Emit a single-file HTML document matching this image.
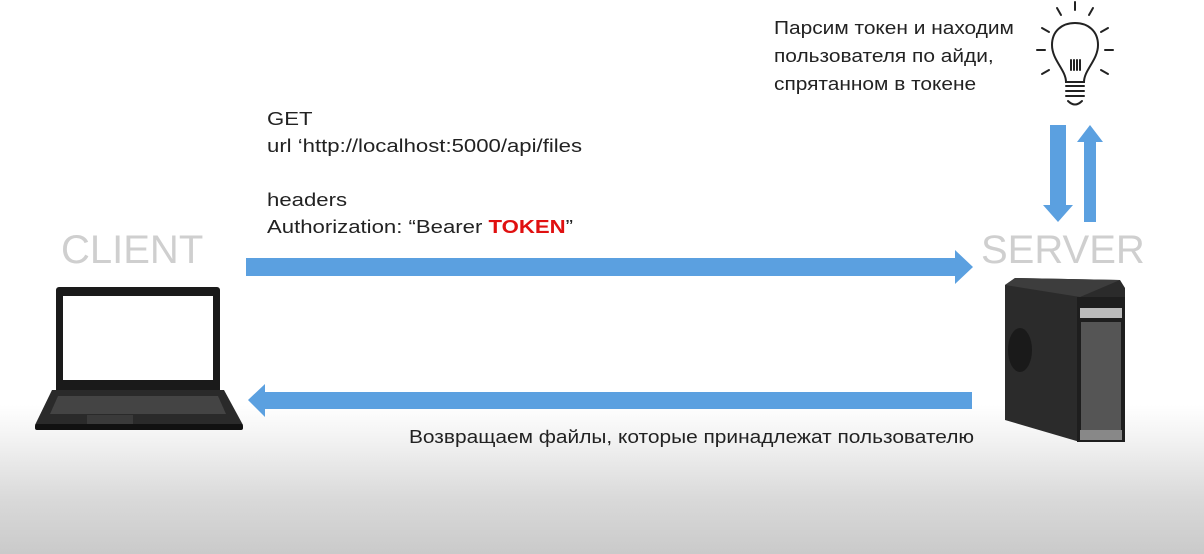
<!DOCTYPE html>
<html><head><meta charset="utf-8"><style>
body{margin:0;width:1204px;height:554px;overflow:hidden;position:relative;font-family:"Liberation Sans","Noto Sans CJK SC",sans-serif;
background:linear-gradient(to bottom,#fff 0,#fff 405px,#f2f2f2 440px,#d9d9d9 500px,#cacaca 554px);}
.t{position:absolute;font-size:18px;color:#222;line-height:27px;white-space:nowrap;transform-origin:0 0;transform:scaleX(1.16)}
.big{position:absolute;font-size:40px;color:#cfcfcf}
</style></head><body>
<div class="t" style="left:267px;top:106px;transform:scaleX(1.23)">GET<br>url ‘http://localhost:5000/api/files<br><br>headers<br>Authorization: “Bearer <b style="color:#e01010">TOKEN</b>”</div>
<div class="t" style="left:774px;top:14px;line-height:28px">Парсим токен и находим<br>пользователя по айди,<br>спрятанном в токене</div>
<div class="t" style="left:409px;top:424px">Возвращаем файлы, которые принадлежат пользователю</div>
<div class="big" style="left:61px;top:228px">CLIENT</div>
<div class="big" style="left:981px;top:228px">SERVER</div>
<svg width="1204" height="554" style="position:absolute;left:0;top:0">
<g fill="#5ba0e0">
<polygon points="246,258 955,258 955,250 973,267 955,284 955,276 246,276"/>
<polygon points="972,392 265,392 265,384 248,400 265,417 265,409 972,409"/>
<polygon points="1050,125 1066,125 1066,205 1073,205 1058,222 1043,205 1050,205"/>
<polygon points="1084,222 1096,222 1096,142 1103,142 1090,125 1077,142 1084,142"/>
</g>
<rect x="56" y="287" width="164" height="106" rx="3" fill="#1a1a1a"/>
<rect x="63" y="296" width="150" height="84" fill="#fff"/>
<polygon points="52,390 224,390 243,425 35,425" fill="#2a2a2a"/>
<polygon points="58,396 218,396 226,414 50,414" fill="#444"/>
<rect x="87" y="415" width="46" height="9" fill="#3a3a3a"/>
<rect x="35" y="424" width="208" height="6" rx="2" fill="#111"/>
<polygon points="1005,285 1015,278 1120,280 1125,288 1125,442 1080,442 1005,420" fill="#2b2b2b"/>
<polygon points="1005,285 1015,278 1120,280 1080,297" fill="#3d3d3d"/>
<rect x="1077" y="297" width="48" height="145" fill="#1e1e1e"/>
<rect x="1080" y="308" width="42" height="10" fill="#bbb"/>
<rect x="1081" y="322" width="40" height="108" fill="#555"/>
<rect x="1080" y="430" width="42" height="10" fill="#888"/>
<ellipse cx="1020" cy="350" rx="12" ry="22" fill="#1a1a1a"/>
<g stroke="#222" stroke-width="2" fill="none" stroke-linecap="round">
<path d="M1066,82 C1066,70 1052,60 1052,45 C1052,31 1062,23 1075,23 C1088,23 1098,31 1098,45 C1098,60 1084,70 1084,82 Z"/>
<path d="M1066,86 H1084 M1066,91 H1084 M1066,96 H1084 M1068,101 Q1075,108 1082,101"/>
<path d="M1071,60 V70 M1074,60 V70 M1077,60 V70 M1080,60 V70"/>
<path d="M1075,2 V10 M1057,8 L1061,15 M1093,8 L1089,15 M1042,28 L1049,32 M1108,28 L1101,32 M1037,50 H1045 M1105,50 H1113 M1042,74 L1049,70 M1108,74 L1101,70"/>
</g>
</svg>
</body></html>
